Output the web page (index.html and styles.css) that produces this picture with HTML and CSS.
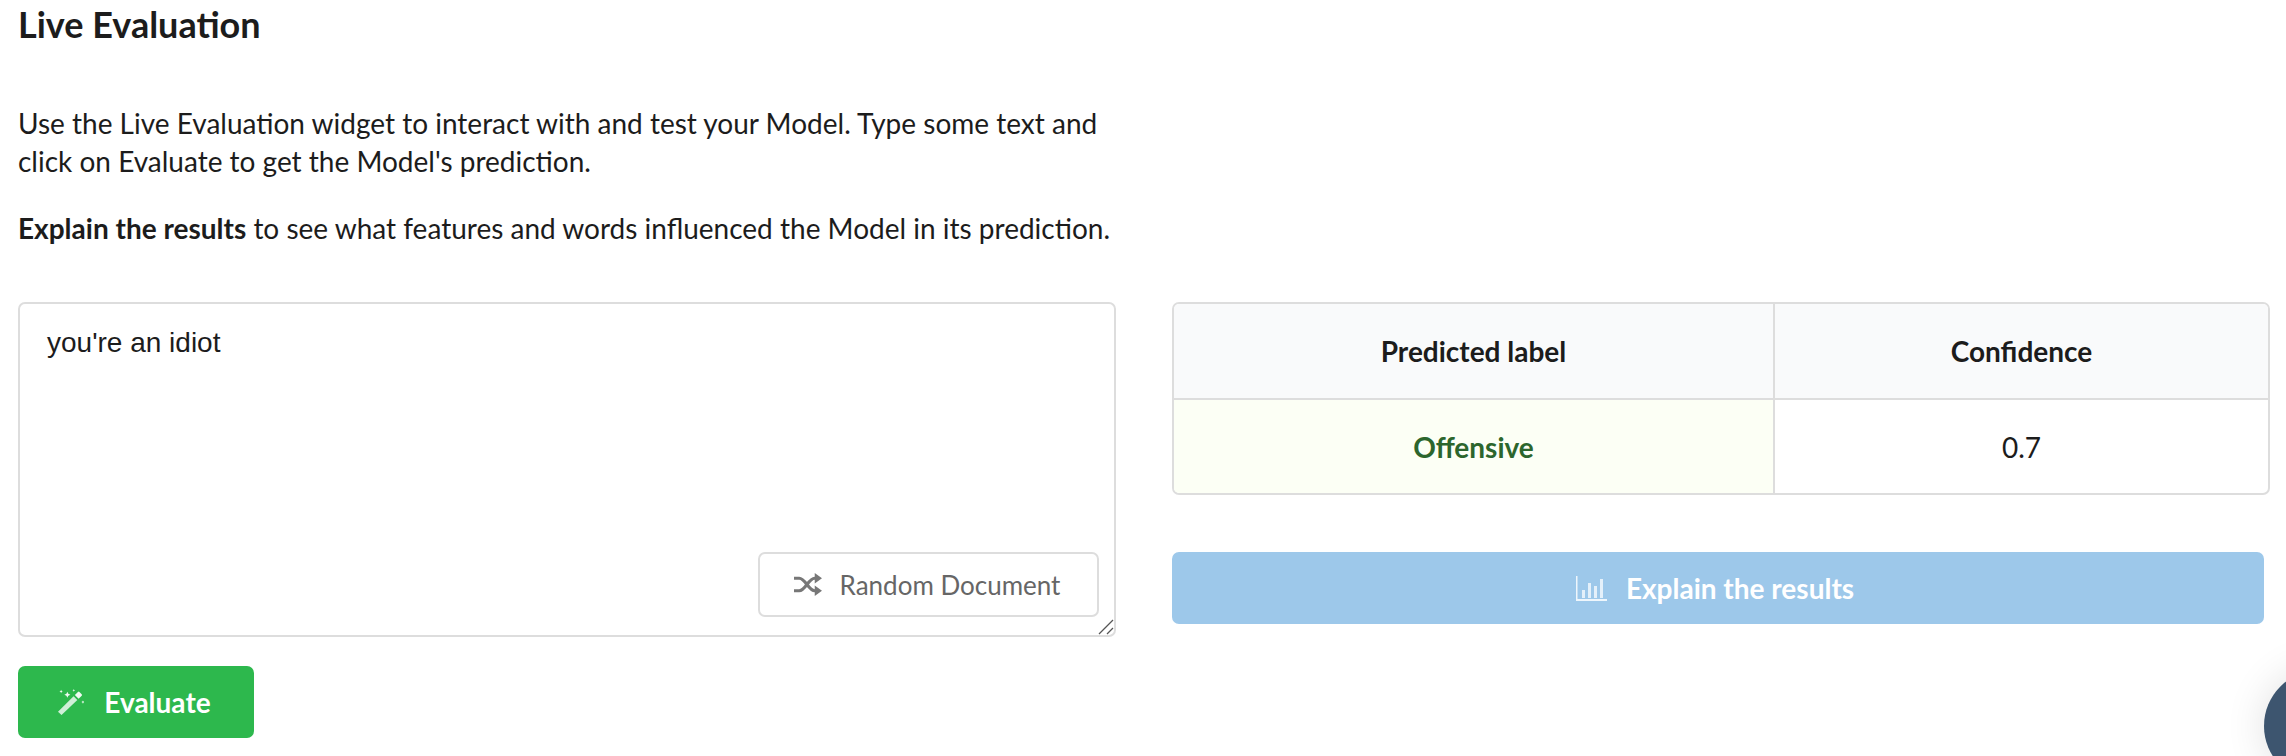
FILE: index.html
```html
<!DOCTYPE html>
<html lang="en">
<head>
<meta charset="utf-8">
<title>Live Evaluation</title>
<link rel="stylesheet" href="styles.css">
</head>
<body>
<main class="page">
  <h1 class="title">Live Evaluation</h1>
  <p class="intro">Use the Live Evaluation widget to interact with and test your Model. Type some text and<br>click on Evaluate to get the Model's prediction.</p>
  <p class="intro"><strong>Explain the results</strong> to see what features and words influenced the Model in its prediction.</p>
  <div class="columns">
    <section class="input-col">
      <div class="editor">
        <textarea class="editor-text">you're an idiot</textarea>
        <button class="random-btn" type="button">
          <svg class="random-icon" viewBox="0 0 27 22" aria-hidden="true">
            <path class="random-lines" d="M0 5h5c6 0 9 12 15 12h2M0 17h5c6 0 9-12 15-12h2"/>
            <path d="M20 0l7 5-7 5zM20 12l7 5-7 5z"/>
          </svg>
          <span>Random Document</span>
        </button>
        <svg class="grip" viewBox="0 0 16 16" aria-hidden="true"><path d="M1 15 15 1M9 15l6-6"/></svg>
      </div>
      <button class="evaluate-btn" type="button">
        <svg class="wand-icon" viewBox="0 0 25 25" aria-hidden="true">
          <path d="M0 21.8 15 7l3.6 3.6L3.4 25z"/>
          <path class="wand-tip" d="M16.2 5.8l3-3a1 1 0 0 1 1.4 0l2.2 2.2a1 1 0 0 1 0 1.4l-3 3z"/>
          <path class="wand-tip" d="M9 2.6l.9 2 2 .9-2 .9-.9 2-.9-2-2-.9 2-.9zM3 .8l.5 1.1 1.1.5-1.1.5L3 4l-.5-1.1-1.1-.5 1.1-.5zM24 11l.5 1.1 1 .5-1 .5L24 14.200l-.5-1.100-1-.5 1-.5zM15.200 0l.4.9.9.4-.9.4-.4.9-.4-.9-.9-.4.9-.4z"/>
        </svg>
        <span>Evaluate</span>
      </button>
    </section>
    <section class="result-col">
      <div class="table-wrap">
        <table class="result-table">
          <thead>
            <tr><th class="col-label">Predicted label</th><th>Confidence</th></tr>
          </thead>
          <tbody>
            <tr><td class="cell-positive">Offensive</td><td>0.7</td></tr>
          </tbody>
        </table>
      </div>
      <button class="explain-btn" type="button">
        <svg class="chart-icon" viewBox="0 0 31 25" aria-hidden="true">
          <path d="M0 0h1.500v23H31v2H0z"/>
          <path class="chart-bars" d="M6 14h3v8H6zM12 7h3v15h-3zM18 10h3v12h-3zM24 3h3v19h-3z"/>
        </svg>
        <span>Explain the results</span>
      </button>
    </section>
  </div>
</main>
<div class="fab"></div>
</body>
</html>
```
FILE: styles.css
```css
* { box-sizing: border-box; }

html, body {
  margin: 0;
  height: 100%;
  background: #fff;
  overflow: hidden;
}

body {
  font-family: Lato, "Liberation Sans", sans-serif;
  color: #1c1c1c;
  font-feature-settings: "liga" 1;
}

.page {
  padding: 0 16px 0 18px;
}

.title {
  margin: 0 0 60px;
  padding-top: 4px;
  font-size: 36px;
  line-height: 40px;
  font-weight: 700;
}

.intro {
  margin: 0 0 29px;
  font-size: 28px;
  line-height: 38px;
  width: 1120px;
}

.columns {
  display: grid;
  grid-template-columns: 1098px 1098px;
  column-gap: 56px;
  margin-top: 55px;
}

.editor {
  position: relative;
  height: 335px;
  margin-bottom: 29px;
}

.editor-text {
  display: block;
  width: 100%;
  height: 100%;
  padding: 22px 27px;
  border: 2px solid #ddd;
  border-radius: 7px;
  outline: none;
  resize: none;
  font-family: "Liberation Sans", Arial, sans-serif;
  font-size: 28px;
  line-height: 34px;
  color: #1c1c1c;
  background: #fff;
}

.grip {
  position: absolute;
  right: 2px;
  bottom: 2px;
  width: 16px;
  height: 16px;
  fill: none;
  stroke: #555;
  stroke-width: 1.3;
  pointer-events: none;
}

.random-btn {
  position: absolute;
  left: 740px;
  top: 250px;
  display: flex;
  align-items: center;
  justify-content: center;
  gap: 18px;
  width: 341px;
  height: 65px;
  padding: 0 3px 0 0;
  border: 2px solid #ddd;
  border-radius: 7px;
  background: #fff;
  font-family: inherit;
  font-size: 26px;
  color: #666;
}

.random-icon {
  width: 28px;
  height: 23px;
  fill: #777;
}

.random-lines {
  fill: none;
  stroke: #777;
  stroke-width: 3;
}

.evaluate-btn,
.explain-btn {
  display: flex;
  align-items: center;
  justify-content: center;
  height: 72px;
  border: 0;
  border-radius: 7px;
  font-family: inherit;
  font-size: 28px;
  font-weight: 700;
  color: #fff;
}

.evaluate-btn {
  width: 236px;
  gap: 20px;
  padding: 0 3px 0 0;
  background: #2db84d;
}

.wand-icon {
  width: 26px;
  height: 26px;
  fill: #d0efd8;
}

.wand-tip { fill: #f0faf3; }

.table-wrap {
  height: 193px;
  border: 2px solid #ddd;
  border-radius: 7px;
  overflow: hidden;
}

.result-table {
  width: 100%;
  height: 100%;
  border-collapse: collapse;
  table-layout: fixed;
  font-size: 28px;
  text-align: center;
}

.result-table th {
  height: 95px;
  padding: 0;
  background: #f9fafb;
  font-weight: 700;
  border-bottom: 2px solid #ddd;
}

.result-table td {
  padding: 0;
}

.col-label,
.cell-positive {
  width: 600px;
  border-right: 2px solid #ddd;
}

.cell-positive {
  background: #fcfff5;
  color: #2c662d;
  font-weight: 700;
}

.explain-btn {
  width: 1092px;
  margin-top: 57px;
  gap: 19px;
  padding: 0 6px 0 0;
  background: #9dc8ea;
}

.chart-icon {
  width: 31px;
  height: 25px;
  fill: #eef6fc;
}

.chart-bars { fill: #e4f0fa; }

.fab {
  position: fixed;
  left: 2264px;
  top: 670px;
  width: 112px;
  height: 112px;
  border-radius: 50%;
  background: #3d556f;
  box-shadow: 0 0 40px rgba(0, 0, 0, 0.12);
}
```
